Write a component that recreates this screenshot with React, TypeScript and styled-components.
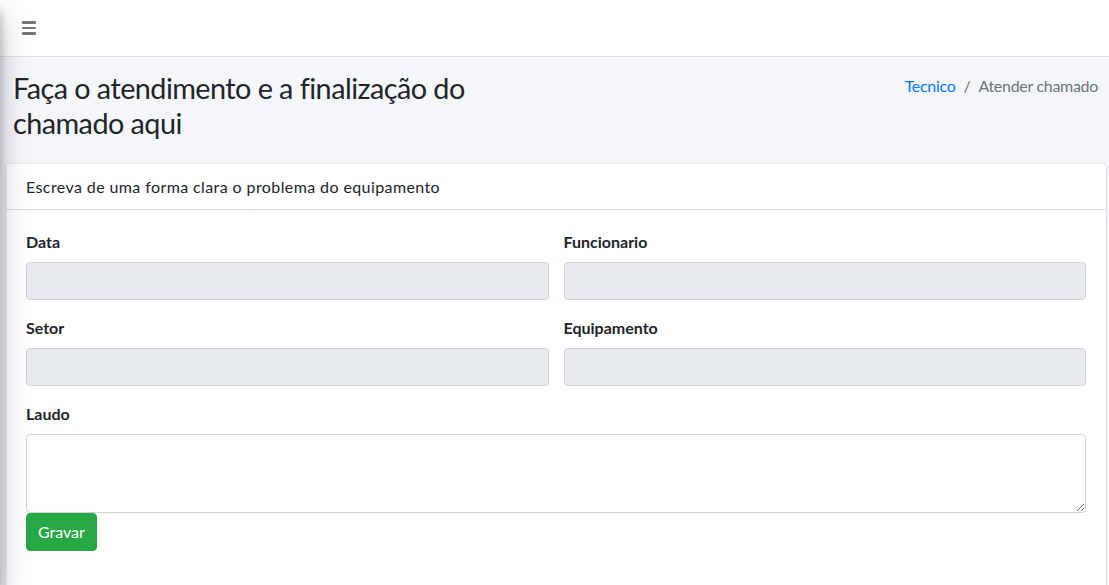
import React from "react";
import styled, { createGlobalStyle } from "styled-components";

const GlobalStyle = createGlobalStyle`
  * {
    box-sizing: border-box;
  }
  html, body {
    margin: 0;
    padding: 0;
    background: #f4f6f9;
    font-family: "Source Sans Pro", Lato, "Noto Sans", Arial, sans-serif;
    font-size: 16px;
    color: #212529;
    overflow: hidden;
  }
`;

const Wrapper = styled.div`
  position: relative;
  min-height: 585px;
  background: #f4f6f9;
`;

const HiddenSidebar = styled.aside`
  position: fixed;
  top: 0;
  left: -250px;
  width: 250px;
  height: 100vh;
  background: #343a40;
  box-shadow: 0 14px 28px rgba(0, 0, 0, 0.25), 0 10px 10px rgba(0, 0, 0, 0.22);
  z-index: 10;
`;

const Navbar = styled.nav`
  height: 57px;
  display: flex;
  align-items: center;
  padding: 0 8px;
  background: #fff;
  border-bottom: 1px solid #dee2e6;
`;

const MenuToggle = styled.button`
  border: 0;
  background: transparent;
  padding: 0 14px;
  height: 40px;
  display: flex;
  flex-direction: column;
  justify-content: center;
  gap: 3px;
  cursor: pointer;
  span {
    display: block;
    width: 14px;
    height: 2.5px;
    border-radius: 1px;
    background: #767676;
  }
`;

const ContentHeader = styled.section`
  display: flex;
  justify-content: space-between;
  align-items: flex-start;
  padding: 14px 11px 24px 13px;
`;

const Title = styled.h1`
  margin: 0;
  width: 539px;
  font-size: 28.8px;
  font-weight: 400;
  line-height: 1.2;
  letter-spacing: -0.55px;
`;

const Breadcrumb = styled.ol`
  list-style: none;
  display: flex;
  margin: 1px 0 0;
  padding: 0;
  line-height: 28.8px;
  font-size: 16px;
  letter-spacing: -0.3px;
  li + li::before {
    content: "/";
    color: #6c757d;
    padding: 0 8px;
  }
`;

const Crumb = styled.li<{ $active?: boolean }>`
  color: ${({ $active }) => ($active ? "#6c757d" : "#007bff")};
`;

const Content = styled.section`
  padding: 0 3px 0 6px;
`;

const Card = styled.div`
  background: #fff;
  border-radius: 4px;
  box-shadow: 0 0 1px rgba(0, 0, 0, 0.125), 0 1px 3px rgba(0, 0, 0, 0.2);
  min-height: 440px;
`;

const CardHeader = styled.div`
  padding: 12px 20px;
  border-bottom: 1px solid rgba(0, 0, 0, 0.125);
`;

const CardTitle = styled.h3`
  margin: 0;
  font-size: 16px;
  font-weight: 400;
  line-height: 21px;
  letter-spacing: 0.4px;
`;

const CardBody = styled.form`
  padding: 20px;
`;

const Row = styled.div`
  display: grid;
  grid-template-columns: 1fr 1fr;
  column-gap: 15px;
`;

const FormGroup = styled.div<{ $last?: boolean }>`
  margin-bottom: ${({ $last }) => ($last ? "0" : "16px")};
`;

const Label = styled.label`
  display: block;
  font-weight: 700;
  font-size: 16px;
  line-height: 24px;
  margin-bottom: 8px;
`;

const Input = styled.input`
  display: block;
  width: 100%;
  height: 38px;
  padding: 6px 12px;
  font: inherit;
  color: #495057;
  background: #e9ecef;
  border: 1px solid #ced4da;
  border-radius: 4px;
`;

const TextArea = styled.textarea`
  display: block;
  width: 100%;
  height: 79px;
  padding: 6px 12px;
  font: inherit;
  color: #495057;
  background: #fff;
  border: 1px solid #ced4da;
  border-radius: 4px;
`;

const SubmitButton = styled.button`
  height: 38px;
  padding: 6px 11px;
  font-family: inherit;
  font-size: 16px;
  line-height: 24px;
  color: #fff;
  background: #28a745;
  border: 1px solid #28a745;
  border-radius: 4px;
  cursor: pointer;
`;

const App = () => {
  return (
    <>
      <GlobalStyle />
      <HiddenSidebar />
      <Wrapper>
        <Navbar>
          <MenuToggle aria-label="Menu">
            <span />
            <span />
            <span />
          </MenuToggle>
        </Navbar>
        <ContentHeader>
          <Title>Faça o atendimento e a finalização do chamado aqui</Title>
          <Breadcrumb>
            <Crumb>Tecnico</Crumb>
            <Crumb $active>Atender chamado</Crumb>
          </Breadcrumb>
        </ContentHeader>
        <Content>
          <Card>
            <CardHeader>
              <CardTitle>Escreva de uma forma clara o problema do equipamento</CardTitle>
            </CardHeader>
            <CardBody onSubmit={(e) => e.preventDefault()}>
              <Row>
                <FormGroup>
                  <Label>Data</Label>
                  <Input readOnly />
                </FormGroup>
                <FormGroup>
                  <Label>Funcionario</Label>
                  <Input readOnly />
                </FormGroup>
                <FormGroup>
                  <Label>Setor</Label>
                  <Input readOnly />
                </FormGroup>
                <FormGroup>
                  <Label>Equipamento</Label>
                  <Input readOnly />
                </FormGroup>
              </Row>
              <FormGroup $last>
                <Label>Laudo</Label>
                <TextArea />
              </FormGroup>
              <SubmitButton type="submit">Gravar</SubmitButton>
            </CardBody>
          </Card>
        </Content>
      </Wrapper>
    </>
  );
};

export default App;
